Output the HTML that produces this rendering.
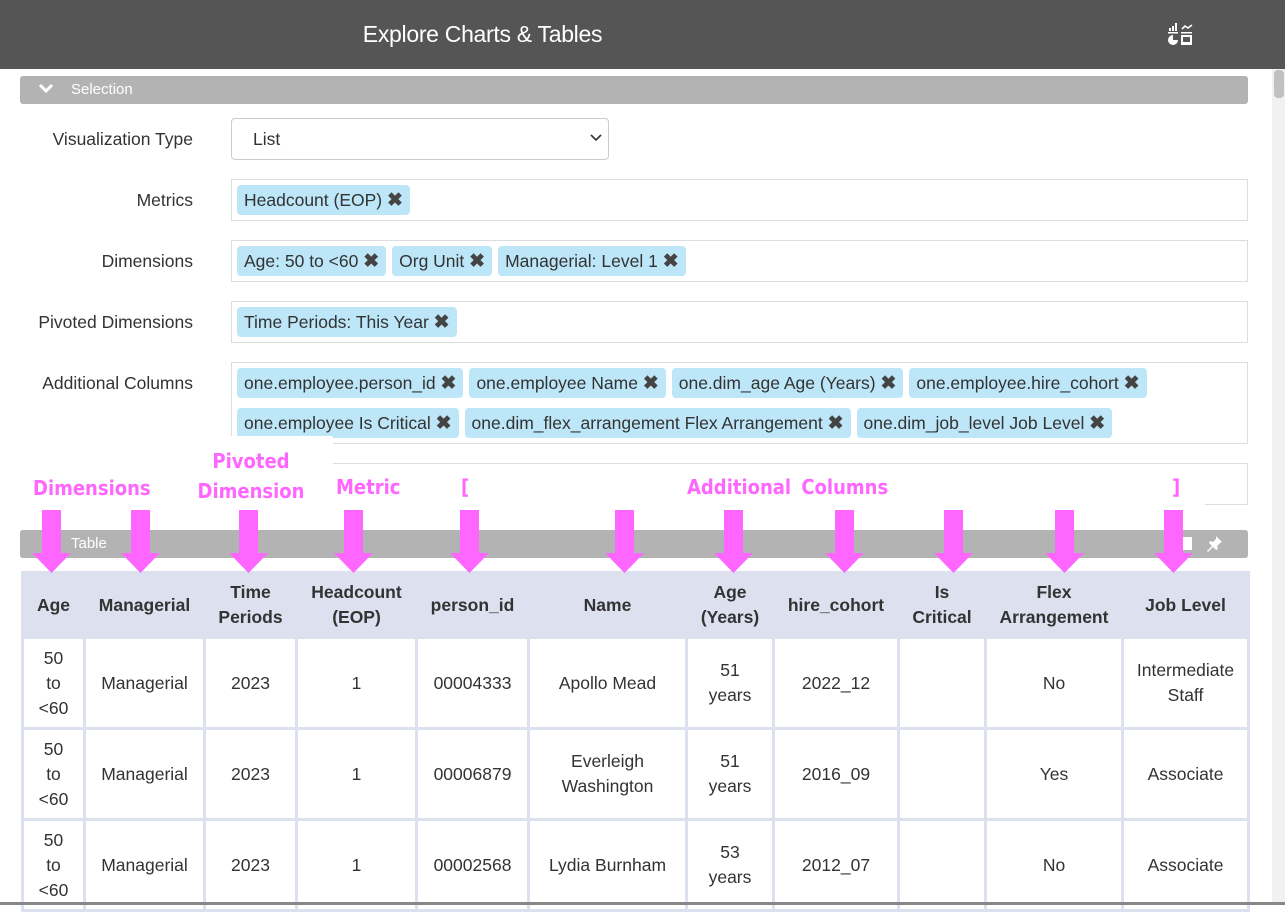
<!DOCTYPE html>
<html><head><style>
*{box-sizing:border-box;margin:0;padding:0}
body{width:1285px;height:905px;overflow:hidden;background:#fff;font-family:"Liberation Sans",sans-serif;color:#333;position:relative}
.abs{position:absolute}
.top{left:0;top:0;width:1285px;height:69px;background:#555}
.title{left:0;width:965px;top:21px;text-align:center;color:#fff;font-size:23px;letter-spacing:-0.3px}
.bar{left:20px;width:1228px;height:28px;background:#b3b3b3;border-radius:3px;color:#fff;font-size:15px}
.lbl{left:0;width:193px;text-align:right;font-size:17.5px}
.inp{left:231px;width:1017px;border:1px solid #ddd;background:#fff;padding:5px 5px;display:flex;flex-wrap:wrap;gap:10px 6px}
.chip{background:#bde7f8;border-radius:4px;height:30px;line-height:30px;padding:0 7px;font-size:17.5px;white-space:nowrap}
.chip b{font-size:19px;color:#444}
.mag{color:#ff66ff;font-weight:bold;font-size:20px;font-family:"DejaVu Sans Condensed","Liberation Sans Narrow",sans-serif}
table{border-collapse:collapse;position:absolute;left:21px;top:571px;font-size:17.5px;table-layout:fixed}
td,th{border:3px solid #dde0ef;text-align:center;vertical-align:middle;line-height:25px}
th{background:#dde0ef;height:65px;color:#333}
td{height:91px}
.arr{position:absolute;top:510px;width:39px;height:63px}
</style></head><body>
<div class="abs top"></div>
<div class="abs title">Explore Charts &amp; Tables</div>
<svg class="abs" style="left:1167px;top:21px" width="28" height="28" viewBox="0 0 28 28" fill="#fff">
<rect x="2" y="7" width="2" height="3"/><rect x="5" y="5" width="2" height="5"/><rect x="8" y="2" width="2" height="8"/><rect x="1" y="11" width="10" height="1.5"/>
<polyline points="15,8 18,5 21,7 25,4" fill="none" stroke="#fff" stroke-width="1.6"/><rect x="14" y="11" width="11" height="1.5"/>
<path d="M6 14 A5 5 0 1 0 11 19 L6 19 Z"/><rect x="14" y="14" width="11" height="10"/><rect x="16" y="16" width="7" height="5" fill="#555"/>
</svg>
<div class="abs" style="left:1272px;top:69px;width:13px;height:836px;background:#f1f1f1"></div>
<div class="abs" style="left:1274px;top:70px;width:10px;height:28px;background:#c1c1c1;border-radius:4px"></div>

<div class="abs bar" style="top:76px"><span style="position:absolute;left:51px;top:5px">Selection</span></div>
<svg class="abs" style="left:38px;top:82px" width="16" height="14"><polyline points="2,3 8,9 14,3" fill="none" stroke="#fff" stroke-width="3"/></svg>

<div class="abs lbl" style="top:129px">Visualization Type</div>
<div class="abs" style="left:231px;top:118px;width:378px;height:42px;border:1px solid #ccc;border-radius:4px;font-size:17.5px;padding:10px 21px">List</div>
<svg class="abs" style="left:590px;top:133px" width="12" height="10"><polyline points="1,2 6,7 11,2" fill="none" stroke="#333" stroke-width="1.6"/></svg>

<div class="abs lbl" style="top:190px">Metrics</div>
<div class="abs inp" style="top:179px;height:42px"><span class="chip">Headcount (EOP) <b>✖</b></span></div>
<div class="abs lbl" style="top:251px">Dimensions</div>
<div class="abs inp" style="top:240px;height:42px"><span class="chip">Age: 50 to &lt;60 <b>✖</b></span><span class="chip">Org Unit <b>✖</b></span><span class="chip">Managerial: Level 1 <b>✖</b></span></div>
<div class="abs lbl" style="top:312px">Pivoted Dimensions</div>
<div class="abs inp" style="top:301px;height:42px"><span class="chip">Time Periods: This Year <b>✖</b></span></div>
<div class="abs lbl" style="top:373px">Additional Columns</div>
<div class="abs inp" style="top:362px;height:82px"><span class="chip">one.employee.person_id <b>✖</b></span><span class="chip">one.employee Name <b>✖</b></span><span class="chip">one.dim_age Age (Years) <b>✖</b></span><span class="chip">one.employee.hire_cohort <b>✖</b></span><span class="chip">one.employee Is Critical <b>✖</b></span><span class="chip">one.dim_flex_arrangement Flex Arrangement <b>✖</b></span><span class="chip">one.dim_job_level Job Level <b>✖</b></span></div>
<div class="abs inp" style="top:463px;height:42px"></div>
<div class="abs" style="left:20px;top:436px;width:313px;height:76px;background:#fff"></div>
<div class="abs" style="left:333px;top:465px;width:872px;height:47px;background:#fff"></div>

<div class="abs mag" style="left:33px;top:476px">Dimensions</div>
<div class="abs mag" style="left:196px;top:446px;width:110px;text-align:center;line-height:30px">Pivoted<br>Dimension</div>
<div class="abs mag" style="left:336px;top:475px">Metric</div>
<div class="abs mag" style="left:461px;top:475px">[</div>
<div class="abs mag" style="left:687px;top:475px;word-spacing:4px">Additional Columns</div>
<div class="abs mag" style="left:1172px;top:475px">]</div>

<div class="abs bar" style="top:530px"><span style="position:absolute;left:51px;top:5px">Table</span></div>
<svg class="abs" style="left:1205px;top:534px" width="20" height="20" fill="#fff"><path d="M11 2 L17 8 L15 9 L12 12 L13 15 L11 16 L8 13 L3 18 L2 17 L7 12 L4 9 L5 7 L8 8 L11 5 Z"/></svg>
<div class="abs" style="left:1180px;top:537px;width:12px;height:13px;background:#fff"></div>

<table>
<colgroup><col style="width:62px"><col style="width:120px"><col style="width:92px"><col style="width:120px"><col style="width:112px"><col style="width:158px"><col style="width:87px"><col style="width:125px"><col style="width:87px"><col style="width:137px"><col style="width:126px"></colgroup>
<tr><th>Age</th><th>Managerial</th><th>Time<br>Periods</th><th>Headcount<br>(EOP)</th><th>person_id</th><th>Name</th><th>Age<br>(Years)</th><th>hire_cohort</th><th>Is<br>Critical</th><th>Flex<br>Arrangement</th><th>Job Level</th></tr>
<tr><td>50<br>to<br>&lt;60</td><td>Managerial</td><td>2023</td><td>1</td><td>00004333</td><td>Apollo Mead</td><td>51<br>years</td><td>2022_12</td><td></td><td>No</td><td>Intermediate<br>Staff</td></tr>
<tr><td>50<br>to<br>&lt;60</td><td>Managerial</td><td>2023</td><td>1</td><td>00006879</td><td>Everleigh<br>Washington</td><td>51<br>years</td><td>2016_09</td><td></td><td>Yes</td><td>Associate</td></tr>
<tr><td>50<br>to<br>&lt;60</td><td>Managerial</td><td>2023</td><td>1</td><td>00002568</td><td>Lydia Burnham</td><td>53<br>years</td><td>2012_07</td><td></td><td>No</td><td>Associate</td></tr>
</table>
<div class="abs" style="left:0;top:902px;width:1285px;height:3px;background:#888"></div>

<svg width="0" height="0" style="position:absolute"><defs><g id="a"><rect x="10" y="0" width="19" height="43" fill="#ff66ff"/><polygon points="0,43 39,43 19.5,63" fill="#ff66ff"/></g></defs></svg>
<svg class="arr" style="left:32px"><use href="#a"/></svg>
<svg class="arr" style="left:121px"><use href="#a"/></svg>
<svg class="arr" style="left:229px"><use href="#a"/></svg>
<svg class="arr" style="left:334px"><use href="#a"/></svg>
<svg class="arr" style="left:450px"><use href="#a"/></svg>
<svg class="arr" style="left:605px"><use href="#a"/></svg>
<svg class="arr" style="left:714px"><use href="#a"/></svg>
<svg class="arr" style="left:825px"><use href="#a"/></svg>
<svg class="arr" style="left:934px"><use href="#a"/></svg>
<svg class="arr" style="left:1045px"><use href="#a"/></svg>
<svg class="arr" style="left:1154px"><use href="#a"/></svg>
</body></html>
